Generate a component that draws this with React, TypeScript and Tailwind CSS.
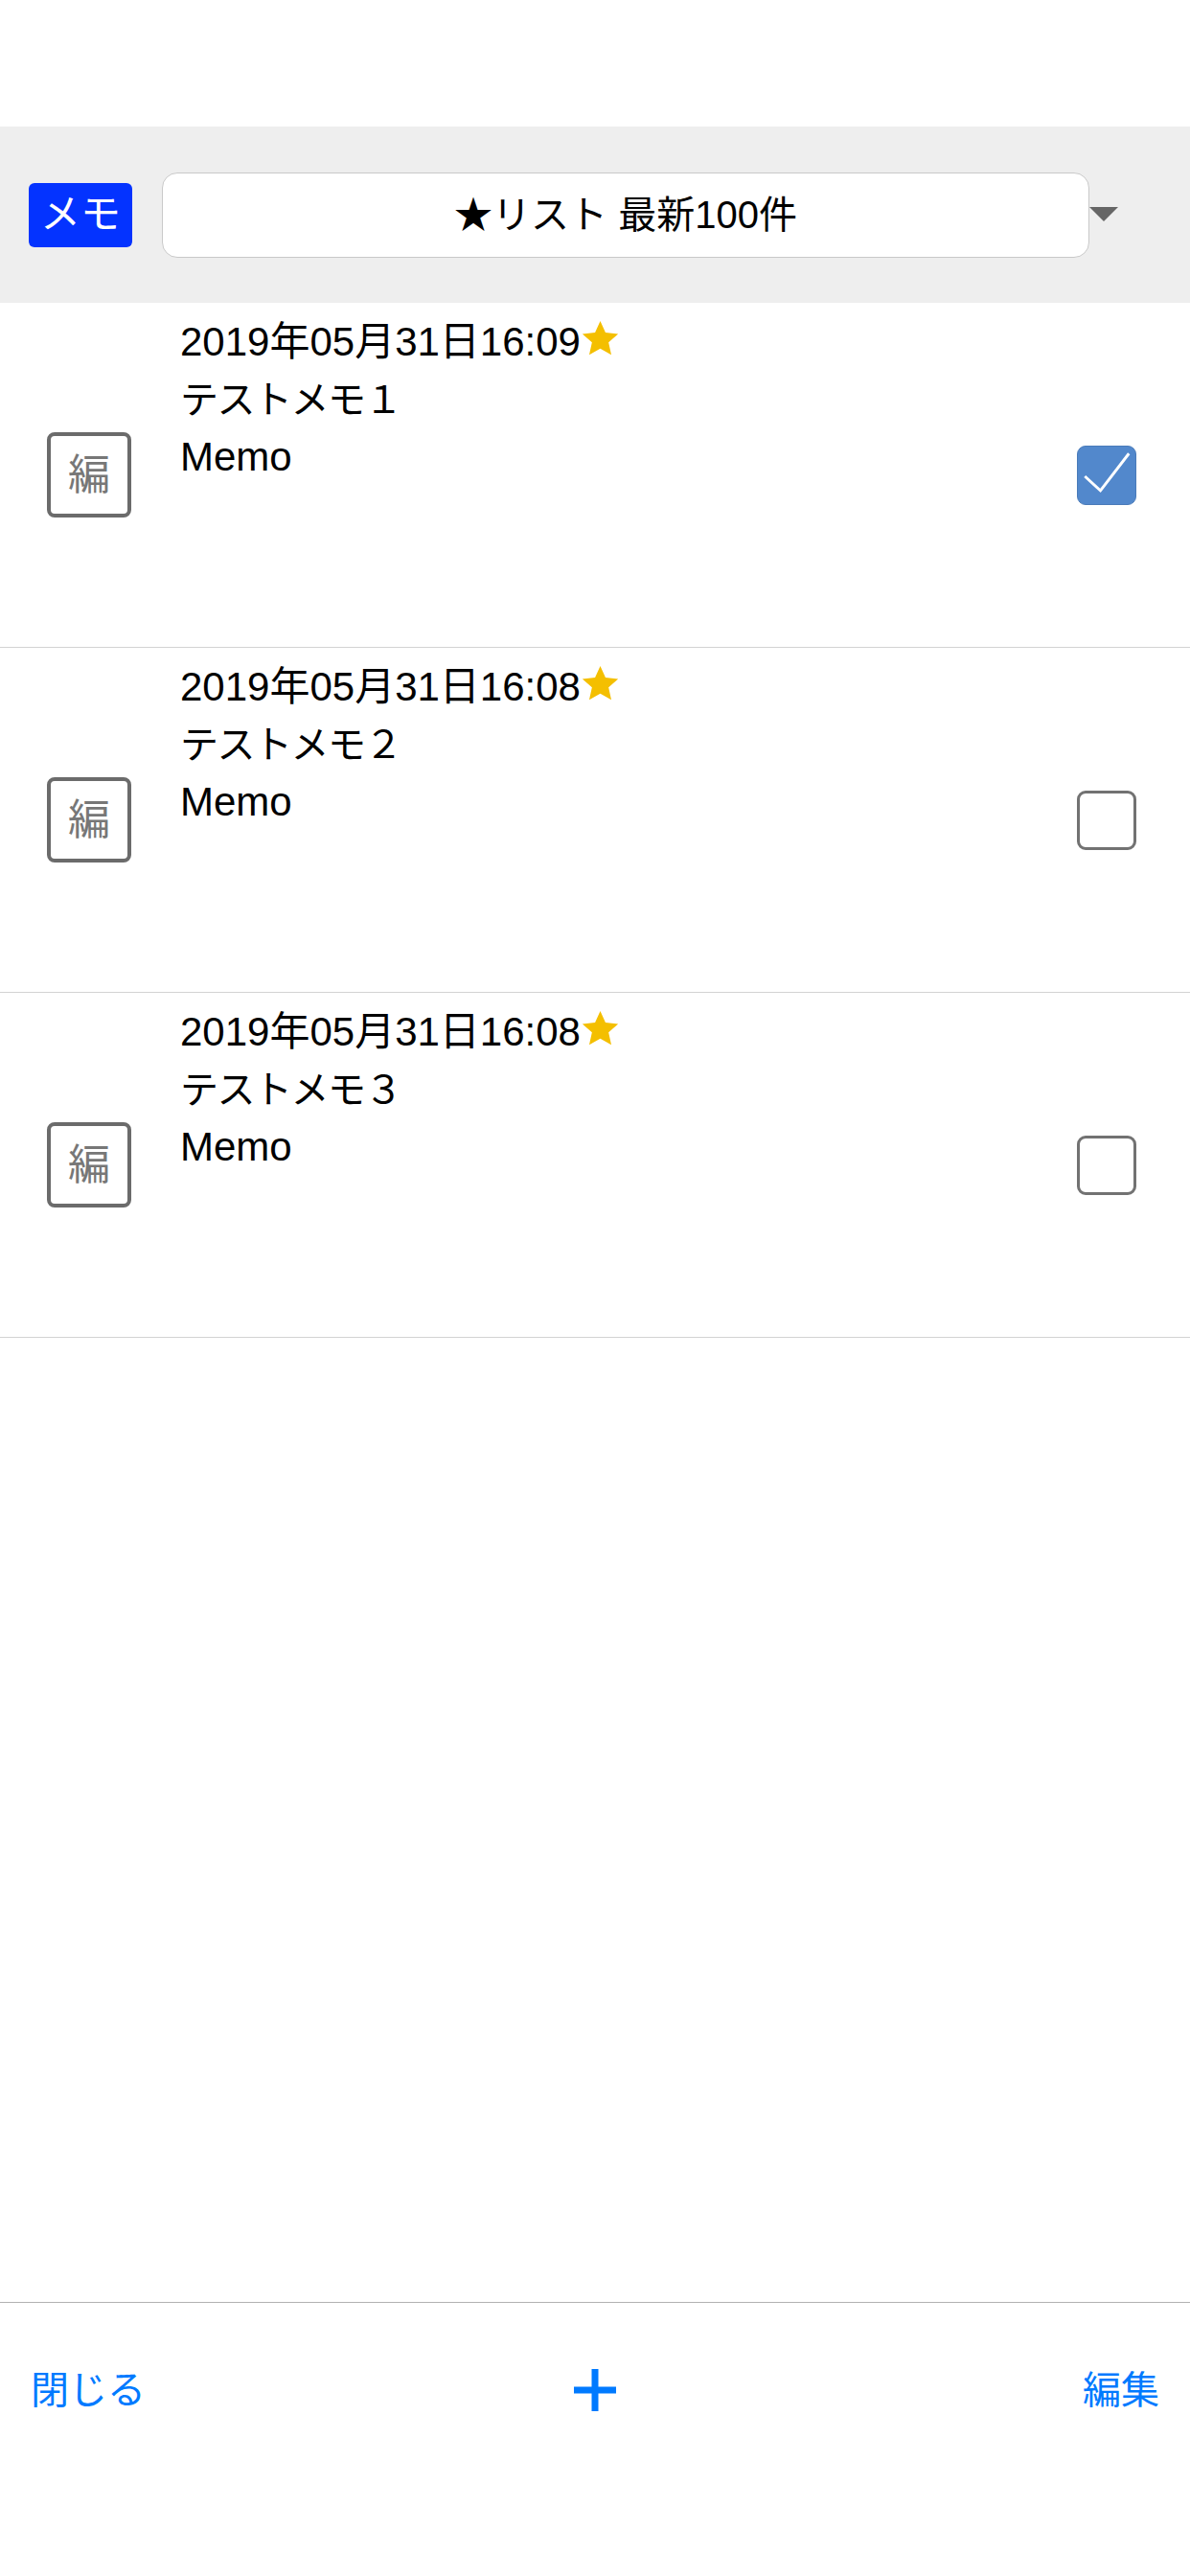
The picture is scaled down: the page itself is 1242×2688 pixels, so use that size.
import React from "react";

const memos = [
  { date: "2019年05月31日16:09", title: "テストメモ１", body: "Memo", checked: true },
  { date: "2019年05月31日16:08", title: "テストメモ２", body: "Memo", checked: false },
  { date: "2019年05月31日16:08", title: "テストメモ３", body: "Memo", checked: false },
];

function Star() {
  return (
    <svg width="41" height="39" viewBox="0 0 24 23" className="inline-block align-baseline -mb-[2px]">
      <path
        d="M12 0.6l3.2 7.1 7.8.8-5.9 5.2 1.7 7.7L12 17.5l-6.8 3.9 1.7-7.7L1 8.5l7.8-.8z"
        fill="#f4bf00"
      />
    </svg>
  );
}

function Check({ checked }: { checked: boolean }) {
  if (checked) {
    return (
      <div className="w-[62px] h-[62px] rounded-[9px] bg-[#5288cc] border border-[#4a7bb9] flex items-center justify-center">
        <svg width="62" height="62" viewBox="0 0 62 62">
          <path d="M7.5 32 L24.3 47.5 L55 7.5" fill="none" stroke="#ffffff" strokeWidth="3" />
        </svg>
      </div>
    );
  }
  return <div className="w-[62px] h-[62px] rounded-[9px] border-[3px] border-[#727272] bg-white" />;
}

export default function App() {
  return (
    <div
      className="w-[1242px] h-[2688px] bg-white flex flex-col text-black"
      style={{ fontFamily: '"Liberation Sans", "Noto Sans CJK JP", sans-serif' }}
    >
      <div className="h-[132px] shrink-0" />
      <div className="h-[184px] shrink-0 bg-[#eeeeee] flex items-center">
        <div className="ml-[30px] w-[108px] h-[67px] rounded-[6px] bg-[#0433ff] text-white text-[42px] leading-none flex items-center justify-center">
          メモ
        </div>
        <div className="ml-[31px] w-[968px] h-[89px] rounded-[16px] border border-[#c9c9c9] bg-white flex items-center justify-center text-[40px] leading-none">
          ★リスト 最新100件
        </div>
        <svg width="30" height="16" viewBox="0 0 30 16" className="shrink-0">
          <path d="M0 0 H30 L15 15 Z" fill="#666666" />
        </svg>
      </div>
      {memos.map((m, i) => (
        <div key={i} className="h-[360px] shrink-0 border-b border-[#d3d3d3] flex items-center">
          <div className="ml-[49px] w-[88px] h-[89px] shrink-0 rounded-[8px] border-4 border-[#6b6b6b] flex items-center justify-center text-[44px] leading-none text-[#777777]">
            編
          </div>
          <div className="self-start ml-[51px] pt-[11px] flex-1 text-[42px]">
            <div className="h-[60px] leading-[60px] whitespace-nowrap">
              {m.date}
              <Star />
            </div>
            <div className="h-[60px] leading-[60px] whitespace-nowrap text-[40px] tracking-[-1.5px]">{m.title}</div>
            <div className="h-[60px] leading-[60px] whitespace-nowrap">{m.body}</div>
          </div>
          <div className="mr-[56px] shrink-0">
            <Check checked={m.checked} />
          </div>
        </div>
      ))}
      <div className="flex-1" />
      <div className="h-[286px] shrink-0 border-t border-[#b2b2b2] flex flex-col">
        <div className="h-[182px] grid grid-cols-3 items-center px-[32px] text-[40px] text-[#007aff]">
          <div className="justify-self-start leading-none">閉じる</div>
          <div className="justify-self-center">
            <svg width="44" height="44" viewBox="0 0 44 44" className="block">
              <rect x="18.5" y="0" width="7" height="44" fill="#007aff" />
              <rect x="0" y="18.5" width="44" height="7" fill="#007aff" />
            </svg>
          </div>
          <div className="justify-self-end leading-none">編集</div>
        </div>
      </div>
    </div>
  );
}
